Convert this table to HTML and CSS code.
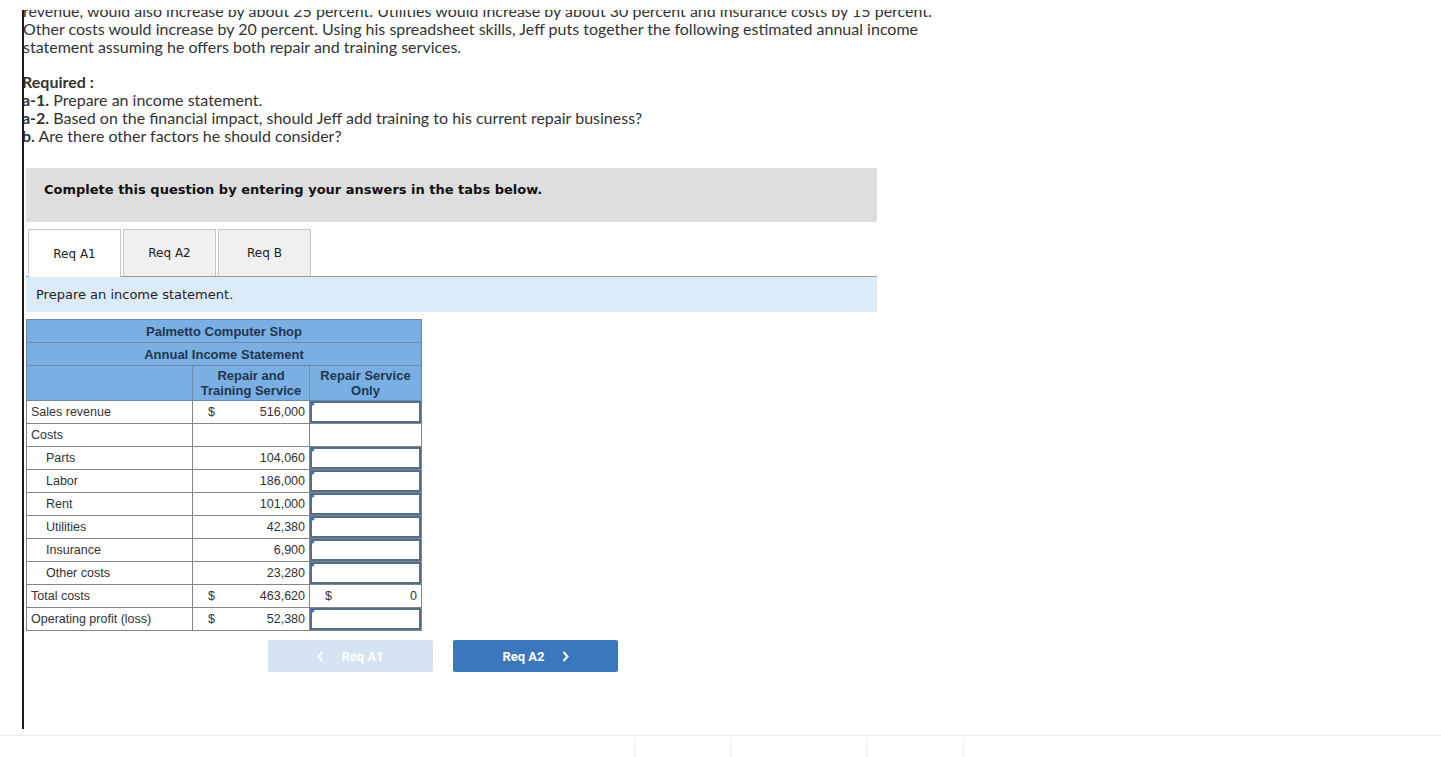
FILE: index.html
```html
<!DOCTYPE html>
<html lang="en">
<head>
<meta charset="utf-8">
<title>Palmetto Computer Shop</title>
<link rel="stylesheet" href="styles.css">
</head>
<body>
<div class="frame">
  <p class="intro">revenue, would also increase by about 25 percent. Utilities would increase by about 30 percent and insurance costs by 15 percent.<br>Other costs would increase by 20 percent. Using his spreadsheet skills, Jeff puts together the following estimated annual income<br>statement assuming he offers both repair and training services.</p>
  <div class="required">
    <div class="req-title">Required :</div>
    <div><b>a-1.</b> Prepare an income statement.</div>
    <div><b>a-2.</b> Based on the financial impact, should Jeff add training to his current repair business?</div>
    <div><b>b.</b> Are there other factors he should consider?</div>
  </div>
  <div class="work">
    <div class="notice">Complete this question by entering your answers in the tabs below.</div>
    <div class="tabs">
      <div class="tab active">Req A1</div>
      <div class="tab">Req A2</div>
      <div class="tab">Req B</div>
    </div>
    <div class="instr">Prepare an income statement.</div>
    <table class="stmt">
      <colgroup><col class="c1"><col class="c2"><col class="c3"></colgroup>
      <tr class="hd"><th colspan="3">Palmetto Computer Shop</th></tr>
      <tr class="hd"><th colspan="3">Annual Income Statement</th></tr>
      <tr class="hd tall"><th></th><th>Repair and<br>Training Service</th><th>Repair Service<br>Only</th></tr>
      <tr><td>Sales revenue</td><td><div class="amt"><span>$</span><span>516,000</span></div></td><td class="in"><input type="text" aria-label="Sales revenue repair only"></td></tr>
      <tr><td>Costs</td><td></td><td></td></tr>
      <tr><td class="ind">Parts</td><td><div class="amt"><span></span><span>104,060</span></div></td><td class="in"><input type="text" aria-label="Parts"></td></tr>
      <tr><td class="ind">Labor</td><td><div class="amt"><span></span><span>186,000</span></div></td><td class="in"><input type="text" aria-label="Labor"></td></tr>
      <tr><td class="ind">Rent</td><td><div class="amt"><span></span><span>101,000</span></div></td><td class="in"><input type="text" aria-label="Rent"></td></tr>
      <tr><td class="ind">Utilities</td><td><div class="amt"><span></span><span>42,380</span></div></td><td class="in"><input type="text" aria-label="Utilities"></td></tr>
      <tr><td class="ind">Insurance</td><td><div class="amt"><span></span><span>6,900</span></div></td><td class="in"><input type="text" aria-label="Insurance"></td></tr>
      <tr><td class="ind">Other costs</td><td><div class="amt"><span></span><span>23,280</span></div></td><td class="in"><input type="text" aria-label="Other costs"></td></tr>
      <tr><td>Total costs</td><td><div class="amt"><span>$</span><span>463,620</span></div></td><td><div class="amt"><span>$</span><span>0</span></div></td></tr>
      <tr><td>Operating profit (loss)</td><td><div class="amt"><span>$</span><span>52,380</span></div></td><td class="in"><input type="text" aria-label="Operating profit"></td></tr>
    </table>
    <div class="nav">
      <button class="btn prev" type="button"><svg width="7" height="11" viewBox="0 0 7 11"><polyline points="5.5,1 1.5,5.5 5.5,10" fill="none" stroke="#fff" stroke-width="2"/></svg>Req A1</button>
      <button class="btn next" type="button">Req A2<svg width="7" height="11" viewBox="0 0 7 11"><polyline points="1.5,1 5.5,5.5 1.5,10" fill="none" stroke="#fff" stroke-width="2"/></svg></button>
    </div>
  </div>
</div>
<div class="footer">
  <div class="fcell w1"></div>
  <div class="fcell w2"></div>
  <div class="fcell w3"></div>
</div>
</body>
</html>
```
FILE: styles.css
```css
html, body {
  margin: 0;
  padding: 0;
  background: #fff;
}
body {
  font-family: "Lato", "Liberation Sans", sans-serif;
  color: #333;
  overflow: hidden;
  padding-top: 10px;
}
.frame {
  margin-left: 22px;
  border-left: 2px solid #1a1a1a;
  height: 719px;
  box-sizing: border-box;
  overflow: hidden;
}
.intro {
  margin: -8px 0 0 -1px;
  font-size: 16px;
  line-height: 18px;
  white-space: nowrap;
}
.required {
  margin: 17px 0 0 -2px;
  font-size: 16px;
  line-height: 18px;
}
.req-title {
  font-weight: bold;
}
.required b {
  font-weight: bold;
}
.work {
  margin: 23px 0 0 2px;
  width: 851px;
}
.notice {
  height: 54px;
  box-sizing: border-box;
  background: #dedede;
  padding: 14px 0 0 18px;
  font-family: "DejaVu Sans", Verdana, sans-serif;
  font-weight: bold;
  font-size: 13px;
  line-height: 15px;
  color: #111;
}
.tabs {
  margin-top: 7px;
  display: flex;
  align-items: flex-start;
  gap: 2px;
  padding-left: 2px;
  height: 47px;
  border-bottom: 1px solid #999;
}
.tab {
  width: 91px;
  height: 46px;
  border: 1px solid #c6c6c6;
  border-bottom: none;
  background: #f0f0f0;
  font-family: "DejaVu Sans", Verdana, sans-serif;
  font-size: 12px;
  color: #222;
  display: flex;
  align-items: center;
  justify-content: center;
}
.tab.active {
  background: #fff;
  height: 47px;
  position: relative;
}
.instr {
  height: 35px;
  background: #dcebf8;
  padding-left: 10px;
  display: flex;
  align-items: center;
  font-family: "DejaVu Sans", Verdana, sans-serif;
  font-size: 13px;
  color: #222;
}
.stmt {
  margin-top: 7px;
  border-collapse: collapse;
  font-family: "Liberation Sans", Arial, sans-serif;
  font-size: 12.5px;
  color: #333;
  table-layout: fixed;
  width: 395px;
}
.c1 { width: 166px; }
.c2 { width: 117px; }
.c3 { width: 112px; }
.stmt td, .stmt th {
  border: 1px solid #858585;
  height: 22px;
  padding: 0 4px;
  box-sizing: content-box;
}
.stmt th {
  background: #7aafe4;
  color: #22364c;
  font-size: 13px;
  font-weight: bold;
  text-align: center;
  line-height: 15px;
  border-color: #6f8aa8;
  padding: 0 2px;
}
.stmt tr.tall th {
  height: 34px;
}
.stmt td.ind {
  padding-left: 19px;
}
.amt {
  display: flex;
  justify-content: space-between;
  padding-left: 11px;
}
.stmt td.in {
  padding: 0;
  position: relative;
}
.stmt td.in input {
  display: block;
  width: 100%;
  height: 22px;
  margin: 0;
  box-sizing: border-box;
  border: 2px solid #536e8b;
  background: #fff;
  font: 12px "Liberation Sans", Arial, sans-serif;
}
.stmt td.in::before {
  content: "";
  position: absolute;
  left: 0;
  top: 0;
  border-top: 3.5px solid transparent;
  border-bottom: 3.5px solid transparent;
  border-left: 5px solid #3f72b3;
  z-index: 1;
}
.nav {
  margin-top: 9px;
  display: flex;
  gap: 20px;
  padding-left: 242px;
}
.btn {
  width: 165px;
  height: 32px;
  border: none;
  border-radius: 2px;
  font-family: Roboto, "Liberation Sans", sans-serif;
  font-weight: bold;
  font-size: 13px;
  color: #fff;
  display: flex;
  align-items: center;
  justify-content: center;
  gap: 17px;
  padding: 0;
}
.btn.prev {
  background: #d6e3f1;
}
.btn.next {
  background: #3a77bd;
}
.footer {
  margin-top: 6px;
  border-top: 1px solid #ececec;
  height: 21px;
  display: flex;
  padding-left: 634px;
}
.fcell {
  border-left: 1px solid #f0f0f0;
  margin-top: 2px;
}
.w1 { width: 95px; }
.w2 { width: 135px; }
.w3 { width: 96px; border-right: 1px solid #f0f0f0; }
```
